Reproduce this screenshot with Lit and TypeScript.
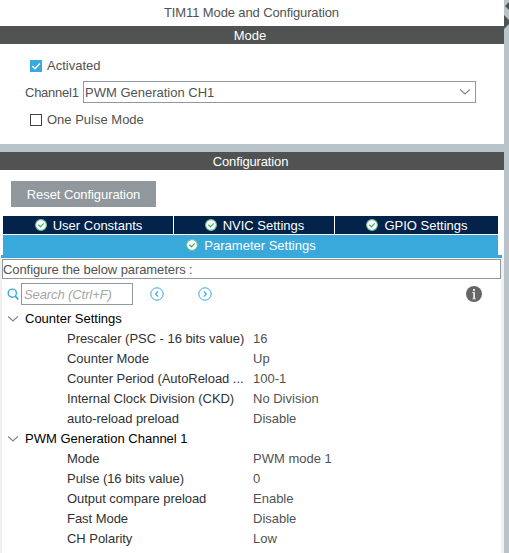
import { LitElement, html, css } from "lit";
import { customElement } from "lit/decorators.js";

interface Group {
  name: string;
  rows: [string, string][];
}

const GROUPS: Group[] = [
  {
    name: "Counter Settings",
    rows: [
      ["Prescaler (PSC - 16 bits value)", "16"],
      ["Counter Mode", "Up"],
      ["Counter Period (AutoReload ...", "100-1"],
      ["Internal Clock Division (CKD)", "No Division"],
      ["auto-reload preload", "Disable"],
    ],
  },
  {
    name: "PWM Generation Channel 1",
    rows: [
      ["Mode", "PWM mode 1"],
      ["Pulse (16 bits value)", "0"],
      ["Output compare preload", "Enable"],
      ["Fast Mode", "Disable"],
      ["CH Polarity", "Low"],
    ],
  },
];

const okIcon = html`<svg width="12" height="12" viewBox="0 0 12 12">
  <circle cx="6" cy="6" r="5.4" fill="#fff" stroke="#6cc091" stroke-width="1.1" />
  <path d="M3.3 5.7 5.4 7.8 8.8 4.4" fill="none" stroke="#4fae76" stroke-width="1.3" />
</svg>`;

const chevron = html`<svg width="12" height="8" viewBox="0 0 12 8">
  <path d="M1.2 1.5 6 6 10.8 1.5" fill="none" stroke="#808284" stroke-width="1.1" />
</svg>`;

@customElement("app-root")
export class AppRoot extends LitElement {
  static styles = css`
    :host {
      display: flex;
      width: 509px;
      height: 553px;
      overflow: hidden;
      background: #b8c4ca;
      font: 13px/18px "Liberation Sans", Arial, sans-serif;
      color: #515352;
    }
    * {
      box-sizing: border-box;
    }
    svg {
      display: block;
      flex: none;
    }
    .main {
      width: 504px;
      display: flex;
      flex-direction: column;
      gap: 8px;
    }
    .side {
      width: 5px;
    }
    .panel {
      background: #fff;
    }
    .mode {
      height: 144px;
    }
    .config {
      flex: 1;
      display: flex;
      flex-direction: column;
    }
    .title {
      height: 26px;
      line-height: 26px;
      text-align: center;
      letter-spacing: -0.12px;
      padding-right: 1px;
    }
    .bar {
      height: 18px;
      flex: none;
      line-height: 19px;
      text-align: center;
      background: #515352;
      color: #fff;
      padding-right: 4px;
    }
    .bar.sub {
      padding-right: 3px;
      letter-spacing: -0.14px;
    }
    .form {
      padding: 12px 28px 0 25px;
    }
    .check {
      display: flex;
      align-items: center;
      gap: 5px;
      height: 19px;
      padding-left: 5px;
    }
    .field {
      display: flex;
      align-items: center;
      margin: 6px 0 7px;
      height: 22px;
    }
    .field label {
      width: 58px;
      letter-spacing: -0.25px;
      padding-top: 2px;
    }
    .select {
      flex: 1;
      height: 22px;
      border: 1px solid #90989e;
      display: flex;
      align-items: center;
      justify-content: space-between;
      padding: 0 4px 0 1px;
    }
    .select span {
      padding-top: 2px;
    }
    .reset {
      width: 145px;
      height: 26px;
      margin: 11px 0 9px 11px;
      flex: none;
      line-height: 27px;
      text-align: center;
      letter-spacing: -0.08px;
      background: #90989e;
      color: #fff;
    }
    .tabs {
      display: grid;
      grid-template-columns: 170px 160px 163px;
      grid-template-rows: 18px 20px;
      gap: 1px;
      padding-left: 3px;
      color: #fff;
    }
    .tab {
      display: flex;
      align-items: center;
      justify-content: center;
      gap: 6px;
      background: #03234b;
      padding-left: 1px;
    }
    .tab span {
      padding-top: 1px;
    }
    .tab.active {
      grid-column: 1 / 4;
      background: #39a9dc;
    }
    .rule {
      height: 3px;
      margin: 0 2px 0 1px;
      flex: none;
      background: #39a9dc;
    }
    .body {
      flex: 1;
      border: solid #f0f0f0;
      border-width: 1px 3px 0 2px;
    }
    .note {
      height: 20px;
      border: 1px solid #90989e;
      line-height: 19px;
      letter-spacing: -0.08px;
    }
    .search {
      display: flex;
      align-items: center;
      height: 22px;
      margin-top: 4px;
      padding-left: 5px;
    }
    .input {
      width: 112px;
      height: 22px;
      margin: 0 17px 0 2px;
      border: 1px solid #90989e;
      padding-left: 2px;
      line-height: 21px;
      font-style: italic;
      letter-spacing: -0.1px;
      color: #a6a6a6;
    }
    .next {
      margin-left: 34px;
    }
    .info {
      margin-left: 254px;
    }
    .tree {
      padding-top: 4px;
    }
    .group,
    .row {
      display: flex;
      align-items: center;
      height: 20px;
    }
    .group {
      gap: 6px;
      padding-left: 5px;
      color: #000;
    }
    .row {
      padding-left: 65px;
    }
    .name {
      width: 186px;
      color: #303234;
      white-space: nowrap;
      letter-spacing: -0.04px;
    }
  `;

  render() {
    return html`
      <div class="main">
        <div class="panel mode">
          <div class="title">TIM11 Mode and Configuration</div>
          <div class="bar">Mode</div>
          <div class="form">
            <div class="check">
              <svg width="12" height="12" viewBox="0 0 12 12">
                <rect width="12" height="12" fill="#39a9dc" />
                <path d="M2.3 6 5 8.7 9.9 3.5" fill="none" stroke="#fff" stroke-width="1.4" />
              </svg>
              <span>Activated</span>
            </div>
            <div class="field">
              <label>Channel1</label>
              <div class="select"><span>PWM Generation CH1</span>${chevron}</div>
            </div>
            <div class="check">
              <svg width="12" height="12" viewBox="0 0 12 12">
                <rect x=".5" y=".5" width="11" height="11" fill="#fff" stroke="#404244" />
              </svg>
              <span>One Pulse Mode</span>
            </div>
          </div>
        </div>
        <div class="panel config">
          <div class="bar sub">Configuration</div>
          <div class="reset">Reset Configuration</div>
          <div class="tabs">
            <div class="tab">${okIcon}<span>User Constants</span></div>
            <div class="tab">${okIcon}<span>NVIC Settings</span></div>
            <div class="tab">${okIcon}<span>GPIO Settings</span></div>
            <div class="tab active">${okIcon}<span>Parameter Settings</span></div>
          </div>
          <div class="rule"></div>
          <div class="body">
            <div class="note">Configure the below parameters :</div>
            <div class="search">
              <svg width="12" height="12" viewBox="0 0 12 12">
                <circle cx="5.3" cy="5.2" r="4.1" fill="none" stroke="#39a9dc" stroke-width="1.4" />
                <path d="M8.2 8.2 11.3 11.3" stroke="#39a9dc" stroke-width="1.7" />
              </svg>
              <div class="input">Search (Ctrl+F)</div>
              <svg width="14" height="14" viewBox="0 0 14 14" fill="none" stroke="#39a9dc">
                <circle cx="7" cy="7" r="6.2" stroke-width="1" />
                <path d="M8.1 4.4 5.7 7 8.1 9.6" stroke-width="1.2" />
              </svg>
              <svg class="next" width="14" height="14" viewBox="0 0 14 14" fill="none" stroke="#39a9dc">
                <circle cx="7" cy="7" r="6.2" stroke-width="1" />
                <path d="M5.9 4.4 8.3 7 5.9 9.6" stroke-width="1.2" />
              </svg>
              <svg class="info" width="16" height="16" viewBox="0 0 16 16">
                <circle cx="8" cy="8" r="8" fill="#666" />
                <path d="M7 3h2v2H7zM6 6h3v6.5h1v.8H6.3v-.8H7.2V6.8H6z" fill="#e4e4e4" />
              </svg>
            </div>
            <div class="tree">
              ${GROUPS.map(
                (g) => html`
                  <div class="group">${chevron}<span>${g.name}</span></div>
                  ${g.rows.map(
                    ([name, value]) => html`<div class="row">
                      <span class="name">${name}</span><span>${value}</span>
                    </div>`
                  )}
                `
              )}
            </div>
          </div>
        </div>
      </div>
      <svg class="side" width="5" height="40" viewBox="0 0 5 40">
        <path d="M5 2 1 6 5 10zM0 15 5 20V24L0 29z" fill="#515352" />
      </svg>
    `;
  }
}
